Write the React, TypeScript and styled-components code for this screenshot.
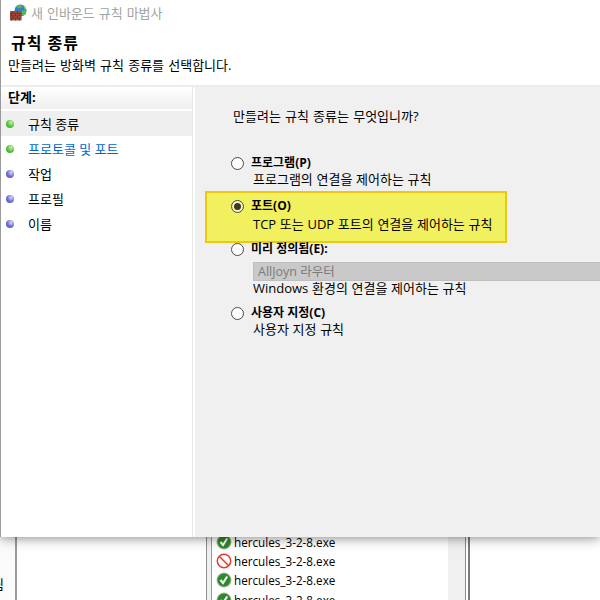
import styled, { createGlobalStyle } from "styled-components";

const GlobalStyle = createGlobalStyle`
  html, body {
    margin: 0;
    padding: 0;
    background: #fff;
  }
  body {
    font-family: "Open Sans", "Noto Sans CJK KR", sans-serif;
    font-size: 13px;
    color: #000;
  }
`;

const Page = styled.div`
  width: 600px;
  height: 600px;
  overflow: hidden;
  display: flex;
  flex-direction: column;
`;

const Wizard = styled.div`
  position: relative;
  z-index: 1;
  flex: none;
  height: 537px;
  display: flex;
  flex-direction: column;
  background: #fff;
  border-left: 1px solid #9a9a9a;
  box-shadow: 0 0 12px rgba(0, 0, 0, 0.55);
`;

const TitleBar = styled.div`
  height: 25px;
  padding-bottom: 4px;
  display: flex;
  align-items: center;
  gap: 4px;
  padding-left: 9px;
  color: #a3a3a3;
  font-size: 13px;
  line-height: 18px;
  word-spacing: 0.6px;
`;

const Header = styled.div`
  height: 56px;
  padding-left: 10px;
  border-bottom: 2px solid #ededed;
`;

const Heading = styled.div`
  font-size: 16px;
  font-weight: 700;
  line-height: 20px;
  margin-top: 4px;
  letter-spacing: 1px;
`;

const SubHeading = styled.div`
  font-size: 13px;
  line-height: 18px;
  margin-top: 3px;
  margin-left: -3px;
  word-spacing: 0.8px;
`;

const Body = styled.div`
  flex: 1;
  display: flex;
  min-height: 0;
`;

const Steps = styled.div`
  width: 191px;
  border-right: 1px solid #e6e6e6;
  margin-right: 2px;
  display: flex;
  flex-direction: column;
`;

const StepsTitle = styled.div`
  height: 22px;
  line-height: 20px;
  padding-left: 7px;
  font-weight: 700;
  margin-bottom: 2px;
  background: linear-gradient(#ffffff, #efefef);
`;

const StepRow = styled.div<{ $active?: boolean; $current?: boolean }>`
  height: 25px;
  display: flex;
  align-items: center;
  padding-left: 5px;
  box-sizing: border-box;
  gap: 14px;
  background: ${(p) => (p.$active ? "#efefef" : "transparent")};
  color: ${(p) => (p.$current ? "#0066cc" : "#000")};
  font-size: 13px;
  line-height: 18px;
`;

const Bullet = styled.span<{ $done?: boolean }>`
  width: 8px;
  height: 8px;
  border-radius: 50%;
  flex: none;
  background: ${(p) =>
    p.$done
      ? "radial-gradient(circle at 65% 30%, #c8f0b0, #4fc23a 55%, #3a9f2c)"
      : "radial-gradient(circle at 65% 30%, #d5d8f5, #6a6ad0 55%, #5252b5)"};
`;

const Content = styled.div`
  flex: 1;
  background: #f0f0f0;
  padding-top: 20px;
  min-width: 0;
`;

const Question = styled.div`
  font-size: 13px;
  line-height: 18px;
  padding-left: 38px;
  margin-bottom: 30px;
  word-spacing: 0.8px;
`;

const Options = styled.div`
  margin-left: 10px;
  display: flex;
  flex-direction: column;
`;

const Option = styled.div<{ $highlight?: boolean; $gap?: number }>`
  display: grid;
  grid-template-columns: 13px 1fr;
  column-gap: 7px;
  padding-left: 26px;
  margin-top: ${(p) => p.$gap ?? 0}px;
  ${(p) =>
    p.$highlight &&
    `
    width: 302px;
    height: 52px;
    box-sizing: border-box;
    padding: 5px 0 0 24px;
    background: #f1f05f;
    border: 2px solid #ecc813;
  `}
`;

const Radio = styled.span<{ $checked?: boolean }>`
  width: 13px;
  height: 13px;
  margin-top: 2px;
  box-sizing: border-box;
  border: 1px solid #4a4a4a;
  border-radius: 50%;
  background: #fff;
  display: flex;
  align-items: center;
  justify-content: center;
  ${(p) => p.$checked && "background: #f7f7c0;"}
  &::after {
    content: "";
    width: 7px;
    height: 7px;
    border-radius: 50%;
    background: ${(p) => (p.$checked ? "#3a3a20" : "transparent")};
  }
`;

const OptionText = styled.div`
  min-width: 0;
`;

const OptionLabel = styled.div`
  font-size: 12px;
  font-weight: 700;
  line-height: 16px;
`;

const OptionDesc = styled.div<{ $tight?: boolean }>`
  font-size: 13px;
  line-height: 16px;
  margin-left: 2px;
  margin-top: ${(p) => (p.$tight ? 2 : 0)}px;
  white-space: nowrap;
  word-spacing: 0.3px;
`;

const Select = styled.div`
  height: 19px;
  width: 360px;
  margin: 5px 0 -1px 2px;
  padding-left: 4px;
  box-sizing: border-box;
  background: #c9c9c9;
  border: 1px solid #bfbfbf;
  color: #7b7b7b;
  font-size: 12.5px;
  line-height: 17px;
`;

const Behind = styled.div`
  flex: 1;
  display: flex;
  min-height: 0;
  background: #fff;
`;

const Gutter = styled.div`
  width: 15px;
  flex: none;
  display: flex;
  align-items: flex-end;
  overflow: hidden;
  background: #fbfbfb;
  border-right: 2px solid #9a9a9a;
`;

const GutterText = styled.span`
  margin-left: -8px;
  margin-bottom: 9px;
  font-size: 13px;
  line-height: 14px;
`;

const LeftPane = styled.div`
  width: 188px;
  flex: none;
  background: #fff;
`;

const ListFrame = styled.div`
  width: 242px;
  flex: none;
  box-sizing: border-box;
  margin-left: 1px;
  padding-left: 7px;
  border-left: 1px solid #8f8f8f;
  background: linear-gradient(to right, #f0f0f0 4px, #9a9a9a 4px, #9a9a9a 5px, #fff 5px);
`;

const FileList = styled.div`
  margin-top: -5px;
`;

const FileRow = styled.div`
  height: 19.4px;
  display: flex;
  align-items: center;
  gap: 2px;
  padding-left: 2px;
  font-size: 11.7px;
  white-space: nowrap;
`;

const ScrollTrack = styled.div`
  width: 17px;
  flex: none;
  background: #f0f0f0;
`;

const Splitter = styled.div`
  width: 5px;
  flex: none;
  border-left: 1px solid #8a8a8a;
  border-right: 2px solid #7a7a7a;
  box-sizing: border-box;
  background: #fff;
`;

function FirewallIcon() {
  return (
    <svg width="17" height="17" viewBox="0 0 17 17">
      <circle cx="10.500" cy="6.500" r="6" fill="#2f7fd6" />
      <path d="M6 3c1.500-2.500 5-3 7-1.500l-1.500 2.500-3 .5zM11 8l3-2.500 2.500 1-1 4-3 1z" fill="#55b848" />
      <path d="M13.500 1.500a6 6 0 0 1 3 4l-2-1z" fill="#e9c45a" />
      <rect x="0" y="7" width="11.500" height="9.500" fill="#a8503d" />
      <path
        d="M0 9.400h11.500M0 11.800h11.500M0 14.200h11.500M3 7v2.400M7.500 7v2.400M1.500 9.400v2.400M5.500 9.400v2.400M9.500 9.400v2.400M3 11.800v2.400M7.500 11.800v2.400M1.500 14.200v2.300M5.500 14.200v2.300M9.500 14.200v2.300"
        stroke="#6b2f22"
        strokeWidth="0.8"
        fill="none"
      />
    </svg>
  );
}

function AllowIcon() {
  return (
    <svg width="16" height="16" viewBox="0 0 16 16">
      <circle cx="8" cy="8" r="7.500" fill="#a8b5a8" />
      <circle cx="8" cy="8" r="6.500" fill="#2c8a28" />
      <path d="M4.500 8l2.500 3 4.200-6.500" stroke="#fff" strokeWidth="2" fill="none" />
    </svg>
  );
}

function BlockIcon() {
  return (
    <svg width="16" height="16" viewBox="0 0 16 16">
      <circle cx="8" cy="8" r="6.700" fill="#fff" stroke="#e53a32" strokeWidth="1.500" />
      <path d="M3.500 3.500l9 9" stroke="#e53a32" strokeWidth="1.500" />
    </svg>
  );
}

const steps = [
  { label: "규칙 종류", done: true, active: true },
  { label: "프로토콜 및 포트", done: true, current: true },
  { label: "작업" },
  { label: "프로필" },
  { label: "이름" },
];

const files = [true, false, true, true];

export default function App() {
  return (
    <>
      <GlobalStyle />
      <Page>
        <Wizard>
          <TitleBar>
            <FirewallIcon />새 인바운드 규칙 마법사
          </TitleBar>
          <Header>
            <Heading>규칙 종류</Heading>
            <SubHeading>만들려는 방화벽 규칙 종류를 선택합니다.</SubHeading>
          </Header>
          <Body>
            <Steps>
              <StepsTitle>단계:</StepsTitle>
              {steps.map((s) => (
                <StepRow key={s.label} $active={s.active} $current={s.current}>
                  <Bullet $done={s.done} />
                  {s.label}
                </StepRow>
              ))}
            </Steps>
            <Content>
              <Question>만들려는 규칙 종류는 무엇입니까?</Question>
              <Options>
                <Option>
                  <Radio />
                  <OptionText>
                    <OptionLabel>프로그램(P)</OptionLabel>
                    <OptionDesc>프로그램의 연결을 제어하는 규칙</OptionDesc>
                  </OptionText>
                </Option>
                <Option $highlight $gap={4}>
                  <Radio $checked />
                  <OptionText>
                    <OptionLabel>포트(O)</OptionLabel>
                    <OptionDesc $tight>TCP 또는 UDP 포트의 연결을 제어하는 규칙</OptionDesc>
                  </OptionText>
                </Option>
                <Option $gap={-2}>
                  <Radio />
                  <OptionText>
                    <OptionLabel>미리 정의됨(E):</OptionLabel>
                    <Select>AllJoyn 라우터</Select>
                    <OptionDesc>Windows 환경의 연결을 제어하는 규칙</OptionDesc>
                  </OptionText>
                </Option>
                <Option $gap={9}>
                  <Radio />
                  <OptionText>
                    <OptionLabel>사용자 지정(C)</OptionLabel>
                    <OptionDesc>사용자 지정 규칙</OptionDesc>
                  </OptionText>
                </Option>
              </Options>
            </Content>
          </Body>
        </Wizard>
        <Behind>
          <Gutter>
            <GutterText>됨</GutterText>
          </Gutter>
          <LeftPane />
          <ListFrame>
            <FileList>
              {files.map((ok, i) => (
                <FileRow key={i}>
                  {ok ? <AllowIcon /> : <BlockIcon />}
                  hercules_3-2-8.exe
                </FileRow>
              ))}
            </FileList>
          </ListFrame>
          <ScrollTrack />
          <Splitter />
        </Behind>
      </Page>
    </>
  );
}
